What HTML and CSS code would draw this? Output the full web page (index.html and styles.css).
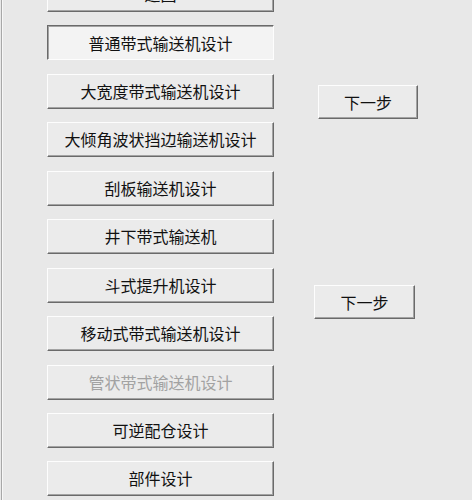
FILE: index.html
```html
<!DOCTYPE html>
<html lang="zh">
<head>
<meta charset="utf-8">
<link rel="stylesheet" href="styles.css">
</head>
<body>
<div class="window">
  <div class="edge"></div>
  <div class="list">
    <button class="btn">返回</button>
    <button class="btn pressed">普通带式输送机设计</button>
    <button class="btn">大宽度带式输送机设计</button>
    <button class="btn">大倾角波状挡边输送机设计</button>
    <button class="btn">刮板输送机设计</button>
    <button class="btn">井下带式输送机</button>
    <button class="btn">斗式提升机设计</button>
    <button class="btn">移动式带式输送机设计</button>
    <button class="btn" disabled>管状带式输送机设计</button>
    <button class="btn">可逆配仓设计</button>
    <button class="btn">部件设计</button>
  </div>
  <div class="side">
    <button class="btn next next-a">下一步</button>
    <button class="btn next next-b">下一步</button>
  </div>
</div>
</body>
</html>
```
FILE: styles.css
```css
html, body {
  margin: 0;
  padding: 0;
  background: #e8e8e8;
}
.window {
  display: flex;
  align-items: flex-start;
  height: 500px;
  overflow: hidden;
  font-family: "Noto Sans CJK SC", "Noto Sans", sans-serif;
}
.edge {
  margin-left: 1px;
  width: 1px;
  height: 500px;
  background: #a8a8a8;
  border-right: 1px solid #f7f7f7;
}
.list {
  margin-left: 44px;
  margin-top: -23px;
  width: 227px;
  display: flex;
  flex-direction: column;
  gap: 13.44px;
}
.btn {
  box-sizing: border-box;
  height: 35px;
  width: 100%;
  margin: 0;
  padding: 0 0 1px 0;
  font-family: inherit;
  font-size: 16px;
  line-height: 1;
  color: #111;
  background: #ebebeb;
  border-top: 1px solid #fdfdfd;
  border-left: 1px solid #fdfdfd;
  border-right: 1px solid #6a6a6a;
  border-bottom: 1px solid #6a6a6a;
  box-shadow: inset -1px -1px 0 #a3a3a3;
  border-radius: 0;
  text-align: center;
}
.btn.pressed {
  background: #f3f3f3;
  border-top: 1px solid #6a6a6a;
  border-left: 1px solid #6a6a6a;
  border-right: 1px solid #fdfdfd;
  border-bottom: 1px solid #fdfdfd;
  box-shadow: inset 1px 1px 0 #a3a3a3;
  padding-top: 1px;
}
.btn:disabled {
  color: #a2a2a2;
}
.side {
  display: flex;
  flex-direction: column;
  margin-left: 44px;
  margin-top: 85px;
}
.next {
  height: 34px;
}
.next-a {
  width: 100px;
}
.next-b {
  width: 101px;
  margin-left: -4px;
  margin-top: 166px;
}
```
